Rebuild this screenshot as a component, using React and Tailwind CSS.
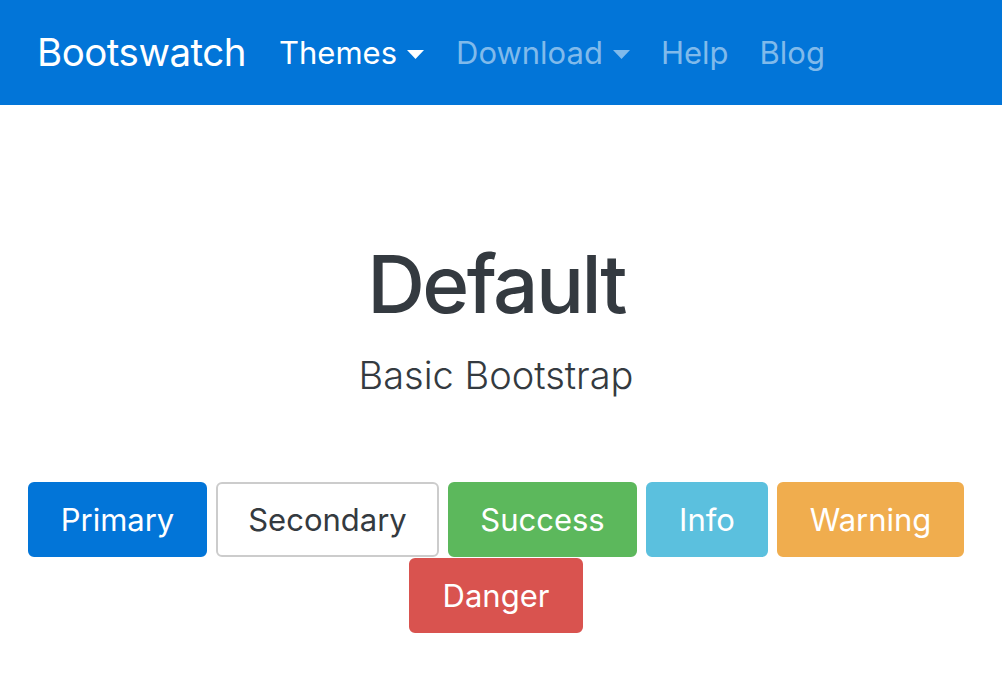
const buttons = [
  { label: 'Primary', cls: 'w-[179px] bg-[#0275d8] text-white border-[#0275d8]' },
  { label: 'Secondary', cls: 'w-[223px] bg-white text-[#343a40] border-[#cccccc]' },
  { label: 'Success', cls: 'w-[189px] bg-[#5cb85c] text-white border-[#5cb85c]' },
  { label: 'Info', cls: 'w-[122px] bg-[#5bc0de] text-white border-[#5bc0de]' },
  { label: 'Warning', cls: 'w-[187px] bg-[#f0ad4e] text-white border-[#f0ad4e]' },
  { label: 'Danger', cls: 'w-[174px] bg-[#d9534f] text-white border-[#d9534f]' },
]

function Caret({ className = '' }) {
  return (
    <svg width="17" height="9" viewBox="0 0 17 9" className={className}>
      <path d="M0 0 H17 L8.5 9 Z" fill="currentColor" />
    </svg>
  )
}

export default function App() {
  return (
    <div className="min-h-[674px] bg-white font-['Inter','Liberation_Sans',sans-serif] overflow-hidden">
      {/* Navbar */}
      <nav className="h-[105px] bg-[#0275d8] flex items-center pl-[37px]">
        <span className="text-[38.5px] text-white tracking-[-0.5px] leading-none">Bootswatch</span>
        <div className="flex items-center ml-[33px] text-[31px] leading-none">
          <span className="flex items-center text-white">
            Themes
            <Caret className="ml-[10px] mt-[4px]" />
          </span>
          <span className="flex items-center text-[#80baeb] ml-[32px]">
            Download
            <Caret className="ml-[10px] mt-[4px]" />
          </span>
          <span className="text-[#80baeb] ml-[31px]">Help</span>
          <span className="text-[#80baeb] ml-[31px]">Blog</span>
        </div>
      </nav>

      {/* Header */}
      <div className="pr-[10px] text-center text-[#343a40]">
        <h1 className="mt-[139px] text-[80px] leading-none font-medium tracking-[-2.6px]">Default</h1>
        <p className="mt-[32px] text-[38px] leading-none font-light">Basic Bootstrap</p>

        <div className="mt-[88px] mx-auto w-[950px] flex flex-wrap justify-center gap-x-[9px] gap-y-[1px]">
          {buttons.map((b) => (
            <button
              key={b.label}
              className={`h-[75px] rounded-[6px] border-2 text-[31px] leading-none ${b.cls}`}
            >
              {b.label}
            </button>
          ))}
        </div>
      </div>
    </div>
  )
}
